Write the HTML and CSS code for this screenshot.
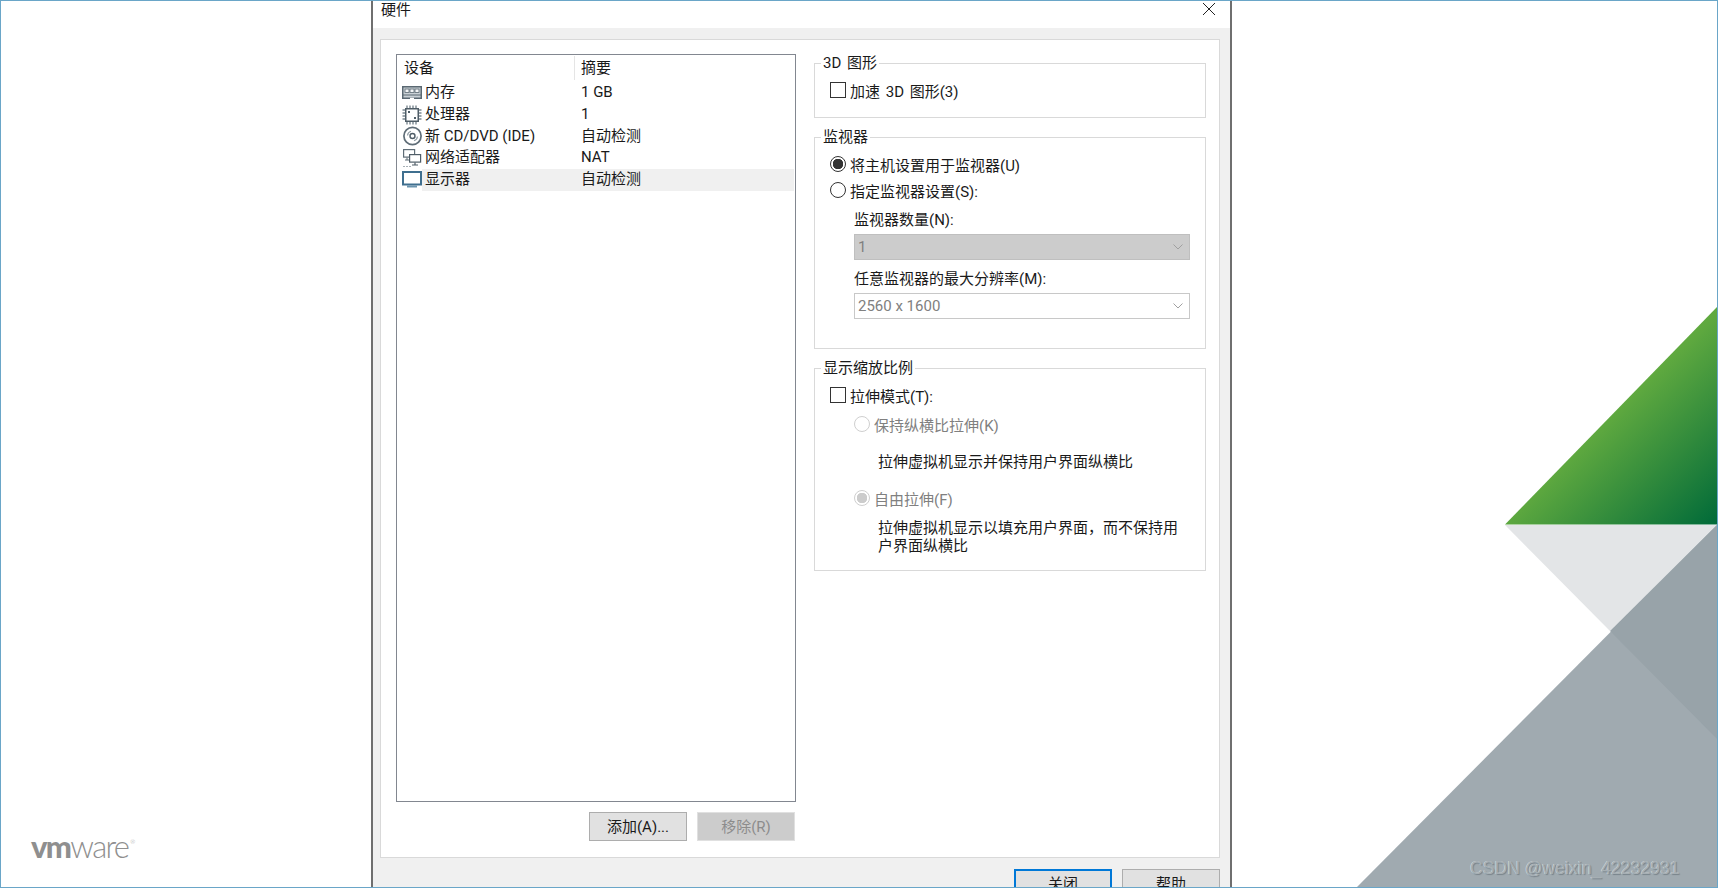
FILE: index.html
```html
<!DOCTYPE html>
<html lang="zh-CN">
<head>
    <meta charset="utf-8">
    <title>硬件</title>
    <link rel="stylesheet" href="styles.css">
</head>
<body>
    <div class="desktop">
        <svg class="backdrop" viewBox="0 0 1718 888" width="1718" height="888">
            <defs>
                <linearGradient id="green-fade" gradientUnits="userSpaceOnUse" x1="1611" y1="415" x2="1717" y2="524">
                    <stop offset="0" stop-color="#5fa93f"/>
                    <stop offset="1" stop-color="#006a39"/>
                </linearGradient>
            </defs>
            <polygon points="1505,524.5 1718,306 1718,524.5" fill="url(#green-fade)"/>
            <polygon points="1505,525 1718,525 1610,631" fill="#e3e5e7"/>
            <polygon points="1718,524 1718,888 1356,888" fill="#a0aab0"/>
            <polygon points="1718,524 1718,740 1610,631" fill="#98a3a9"/>
        </svg>

        <div class="logo"><b>vm</b>ware<sup>®</sup></div>
        <div class="watermark">CSDN @weixin_42232931</div>

        <div class="dialog">
            <div class="titlebar">
                <span class="title">硬件</span>
                <svg class="close-icon" width="14" height="14" viewBox="0 0 14 14">
                    <path d="M1 1L13 13M13 1L1 13" stroke="#222" stroke-width="1" fill="none"/>
                </svg>
            </div>

            <div class="dialog-body">
                <div class="panel">
                    <div class="left-col">
                        <div class="device-list">
                            <div class="list-head">
                                <span class="head-name">设备</span>
                                <span class="head-summary">摘要</span>
                            </div>

                            <div class="device-row">
                                <svg class="device-icon" width="20" height="14" viewBox="0 0 20 14">
                                    <rect x="0.75" y="0.75" width="18.5" height="11.5" fill="#c9d0d5" stroke="#5a6872" stroke-width="1.5"/>
                                    <rect x="3" y="3" width="4" height="3.5" fill="#f4f6f7" stroke="#5a6872" stroke-width="0.8"/>
                                    <rect x="8" y="3" width="4" height="3.5" fill="#f4f6f7" stroke="#5a6872" stroke-width="0.8"/>
                                    <rect x="13" y="3" width="4" height="3.5" fill="#f4f6f7" stroke="#5a6872" stroke-width="0.8"/>
                                    <path d="M1 9H19" stroke="#5a6872"/>
                                    <path d="M8 12.5H12" stroke="#fff" stroke-width="1.5"/>
                                </svg>
                                <div class="device-cells">
                                    <span class="device-name">内存</span>
                                    <span class="device-summary">1 GB</span>
                                </div>
                            </div>

                            <div class="device-row">
                                <svg class="device-icon" width="20" height="20" viewBox="0 0 20 20">
                                    <rect x="3.75" y="3.75" width="12.5" height="12.5" fill="#fff" stroke="#4f5d67" stroke-width="1.5"/>
                                    <path d="M5 0.5V3M8 0.5V3M11 0.5V3M14 0.5V3M5 17V19.5M8 17V19.5M11 17V19.5M14 17V19.5M0.5 5H3M0.5 8H3M0.5 11H3M0.5 14H3M17 5H19.5M17 8H19.5M17 11H19.5M17 14H19.5" stroke="#7b8891" stroke-width="1.4"/>
                                    <rect x="6" y="6" width="2" height="2" fill="#4f5d67"/>
                                    <rect x="12" y="12" width="2" height="2" fill="#4f5d67"/>
                                </svg>
                                <div class="device-cells">
                                    <span class="device-name">处理器</span>
                                    <span class="device-summary">1</span>
                                </div>
                            </div>

                            <div class="device-row">
                                <svg class="device-icon" width="20" height="20" viewBox="0 0 20 20">
                                    <circle cx="10.5" cy="10" r="8.6" fill="#fff" stroke="#5f6d77" stroke-width="1.7"/>
                                    <circle cx="10.5" cy="10" r="2.5" fill="#fff" stroke="#4f5d67" stroke-width="1.4"/>
                                    <path d="M5.5 9.5a5 5 0 0 1 3.5-4.2M15.5 10.5a5 5 0 0 1-3.5 4.2" stroke="#8f9ba3" stroke-width="1.2" fill="none"/>
                                </svg>
                                <div class="device-cells">
                                    <span class="device-name">新 CD/DVD (IDE)</span>
                                    <span class="device-summary">自动检测</span>
                                </div>
                            </div>

                            <div class="device-row">
                                <svg class="device-icon" width="20" height="20" viewBox="0 0 20 20">
                                    <rect x="1.6" y="1.6" width="11" height="7.5" fill="#fff" stroke="#5f6d77" stroke-width="1.2"/>
                                    <path d="M5 9.5V12M3 12H7" stroke="#5f6d77"/>
                                    <rect x="7.6" y="6.6" width="11" height="7.5" fill="#fff" stroke="#4f5d67" stroke-width="1.2"/>
                                    <path d="M13 14.5V17M10 17H16" stroke="#4f5d67" stroke-width="1.2"/>
                                    <path d="M1 18.5H9" stroke="#a7b0b6" stroke-dasharray="2 1"/>
                                </svg>
                                <div class="device-cells">
                                    <span class="device-name">网络适配器</span>
                                    <span class="device-summary">NAT</span>
                                </div>
                            </div>

                            <div class="device-row">
                                <svg class="device-icon" width="20" height="18" viewBox="0 0 20 18">
                                    <rect x="1" y="1" width="18" height="12.5" fill="#fff" stroke="#3f6f8f" stroke-width="2"/>
                                    <path d="M5 15.5H15" stroke="#6a93ad" stroke-width="2"/>
                                </svg>
                                <div class="device-cells is-selected">
                                    <span class="device-name">显示器</span>
                                    <span class="device-summary">自动检测</span>
                                </div>
                            </div>
                        </div>

                        <div class="list-actions">
                            <button class="btn">添加(A)...</button>
                            <button class="btn btn-disabled">移除(R)</button>
                        </div>
                    </div>

                    <div class="right-col">
                        <fieldset class="group group-3d">
                            <legend>3D 图形</legend>
                            <label class="option"><input type="checkbox">加速 3D 图形(3)</label>
                        </fieldset>

                        <fieldset class="group group-monitor">
                            <legend>监视器</legend>
                            <label class="option"><input type="radio" name="monitor" checked>将主机设置用于监视器(U)</label>
                            <label class="option option-second"><input type="radio" name="monitor">指定监视器设置(S):</label>
                            <div class="field-label field-label-first">监视器数量(N):</div>
                            <div class="dropdown dropdown-disabled">
                                <span>1</span>
                                <svg width="10" height="6" viewBox="0 0 10 6"><path d="M0.5 0.5L5 5L9.5 0.5" stroke="#a0a0a0" fill="none"/></svg>
                            </div>
                            <div class="field-label">任意监视器的最大分辨率(M):</div>
                            <div class="dropdown">
                                <span>2560 x 1600</span>
                                <svg width="10" height="6" viewBox="0 0 10 6"><path d="M0.5 0.5L5 5L9.5 0.5" stroke="#a0a0a0" fill="none"/></svg>
                            </div>
                        </fieldset>

                        <fieldset class="group group-scale">
                            <legend>显示缩放比例</legend>
                            <label class="option"><input type="checkbox">拉伸模式(T):</label>
                            <label class="option option-sub is-disabled"><input type="radio" name="stretch" disabled>保持纵横比拉伸(K)</label>
                            <p class="hint hint-first">拉伸虚拟机显示并保持用户界面纵横比</p>
                            <label class="option option-sub option-free is-disabled"><input type="radio" name="stretch" disabled checked>自由拉伸(F)</label>
                            <p class="hint hint-last">拉伸虚拟机显示以填充用户界面，而不保持用户界面纵横比</p>
                        </fieldset>
                    </div>
                </div>

                <div class="dialog-footer">
                    <button class="btn btn-default">关闭</button>
                    <button class="btn">帮助</button>
                </div>
            </div>
        </div>
    </div>
</body>
</html>
```

FILE: styles.css
```css
* {
    box-sizing: border-box;
}
html, body {
    margin: 0;
    height: 888px;
    overflow: hidden;
}
body {
    font-family: "Roboto", "Noto Sans CJK SC", sans-serif;
    font-size: 15px;
    color: #1a1a1a;
}
.desktop {
    position: relative;
    width: 1718px;
    height: 888px;
    border: 1px solid #6aa6c8;
    background: #fff;
    overflow: hidden;
}
.backdrop {
    position: absolute;
    left: -1px;
    top: -1px;
}
.logo {
    position: absolute;
    left: 30px;
    top: 826px;
    font-family: "Lato", sans-serif;
    font-size: 31px;
    font-weight: 300;
    line-height: 38px;
    letter-spacing: -1.7px;
    color: #8f8f8f;
}
.logo b {
    font-weight: 900;
}
.logo sup {
    font-size: 6px;
    letter-spacing: 0;
    vertical-align: 14px;
    line-height: 0;
    margin-left: 2px;
}
.watermark {
    position: absolute;
    left: 1469px;
    top: 857px;
    font-family: "Liberation Sans", sans-serif;
    font-size: 17.6px;
    line-height: 20px;
    color: #a6afb4;
    text-shadow: 1px 1px 1px #78838a, -0.5px -0.5px 0.5px #e2e6e8;
}

/* dialog window */
.dialog {
    position: absolute;
    left: 370px;
    top: -1px;
    width: 861px;
    height: 900px;
    border-left: 2px solid #6f6f6f;
    border-right: 2px solid #6f6f6f;
    background: #f0f0f0;
}
.titlebar {
    display: flex;
    justify-content: space-between;
    height: 28px;
    background: #fff;
    padding: 0 14px 0 8px;
}
.title {
    line-height: 20px;
}
.close-icon {
    margin-top: 2px;
}
.dialog-body {
    padding: 11px 10px 0 7px;
}
.panel {
    display: flex;
    gap: 18px;
    height: 819px;
    padding: 13px 13px 0 15px;
    background: #fff;
    border: 1px solid #d9d9d9;
}
.dialog-footer {
    display: flex;
    justify-content: flex-end;
    gap: 10px;
    margin-top: 11px;
}

/* left column */
.left-col {
    width: 400px;
    padding-top: 1px;
}
.device-list {
    height: 748px;
    padding: 1px;
    border: 1px solid #828790;
}
.list-head {
    display: flex;
    height: 26px;
    line-height: 24px;
}
.head-name {
    width: 177px;
    height: 24px;
    padding-left: 6px;
    border-right: 1px solid #e5e5e5;
}
.head-summary {
    padding-left: 6px;
}
.device-row {
    display: flex;
    align-items: center;
    height: 21.75px;
    padding-left: 4px;
}
.device-icon {
    flex: none;
    margin-right: -20px;
}
.device-cells {
    display: flex;
    flex: 1;
    height: 100%;
    margin-left: 20px;
    line-height: 21.75px;
}
.device-cells.is-selected {
    background: #f0f0f0;
}
.device-name {
    width: 159px;
    padding-left: 3px;
}
.list-actions {
    display: flex;
    justify-content: flex-end;
    gap: 10px;
    margin: 10px 1px 0 0;
}

/* buttons */
.btn {
    width: 98px;
    height: 29px;
    padding: 0 0 3px;
    font: inherit;
    color: #1a1a1a;
    background: #e1e1e1;
    border: 1px solid #adadad;
}
.btn-disabled {
    color: #8c8c8c;
    background: #cccccc;
    border-color: #e0e0e0;
}
.btn-default {
    border: 2px solid #0078d7;
}

/* right column */
.right-col {
    width: 392px;
}
.group {
    min-width: 0;
    margin: 0 0 9px;
    padding: 7px 15px 17px;
    border: 1px solid #d9d9d9;
}
.group-3d {
    word-spacing: 2px;
}
.group legend {
    margin-left: -9px;
    padding: 0 2px;
    line-height: 20px;
}
.option {
    display: flex;
    align-items: center;
    height: 20px;
}
.option input {
    appearance: none;
    flex: none;
    width: 16px;
    height: 16px;
    margin: 0 4px 0 0;
    border: 1px solid #333;
    background: #fff;
}
.option input[type="radio"] {
    border-radius: 50%;
}
.option input[type="radio"]:checked {
    background: radial-gradient(circle, #333 0 5px, #fff 5.5px);
}
.option.is-disabled {
    color: #808080;
}
.option.is-disabled input {
    border-color: #cfcfcf;
}
.option.is-disabled input:checked {
    background: radial-gradient(circle, #cccccc 0 5px, #fff 5.5px);
}
.option-second {
    margin-top: 6px;
}
.field-label {
    margin: 9px 0 4px 24px;
    line-height: 20px;
}
.field-label-first {
    margin-top: 10px;
}
.dropdown {
    display: flex;
    justify-content: space-between;
    align-items: center;
    width: 336px;
    height: 26px;
    margin-left: 24px;
    padding: 0 6px 0 3px;
    color: #808080;
    background: #fff;
    border: 1px solid #c8c8c8;
}
.dropdown-disabled {
    background: #cccccc;
    border-color: #bfbfbf;
}
.group-monitor {
    padding-bottom: 29px;
}
.group-scale {
    padding-bottom: 15px;
}
.option-sub {
    margin: 9px 0 0 24px;
}
.option-free {
    margin-top: 16px;
}
.hint {
    margin: 0 0 0 48px;
    max-width: 302px;
}
.hint-first {
    margin-top: 18px;
    line-height: 20px;
}
.hint-last {
    margin-top: 11px;
    line-height: 18px;
}
```
